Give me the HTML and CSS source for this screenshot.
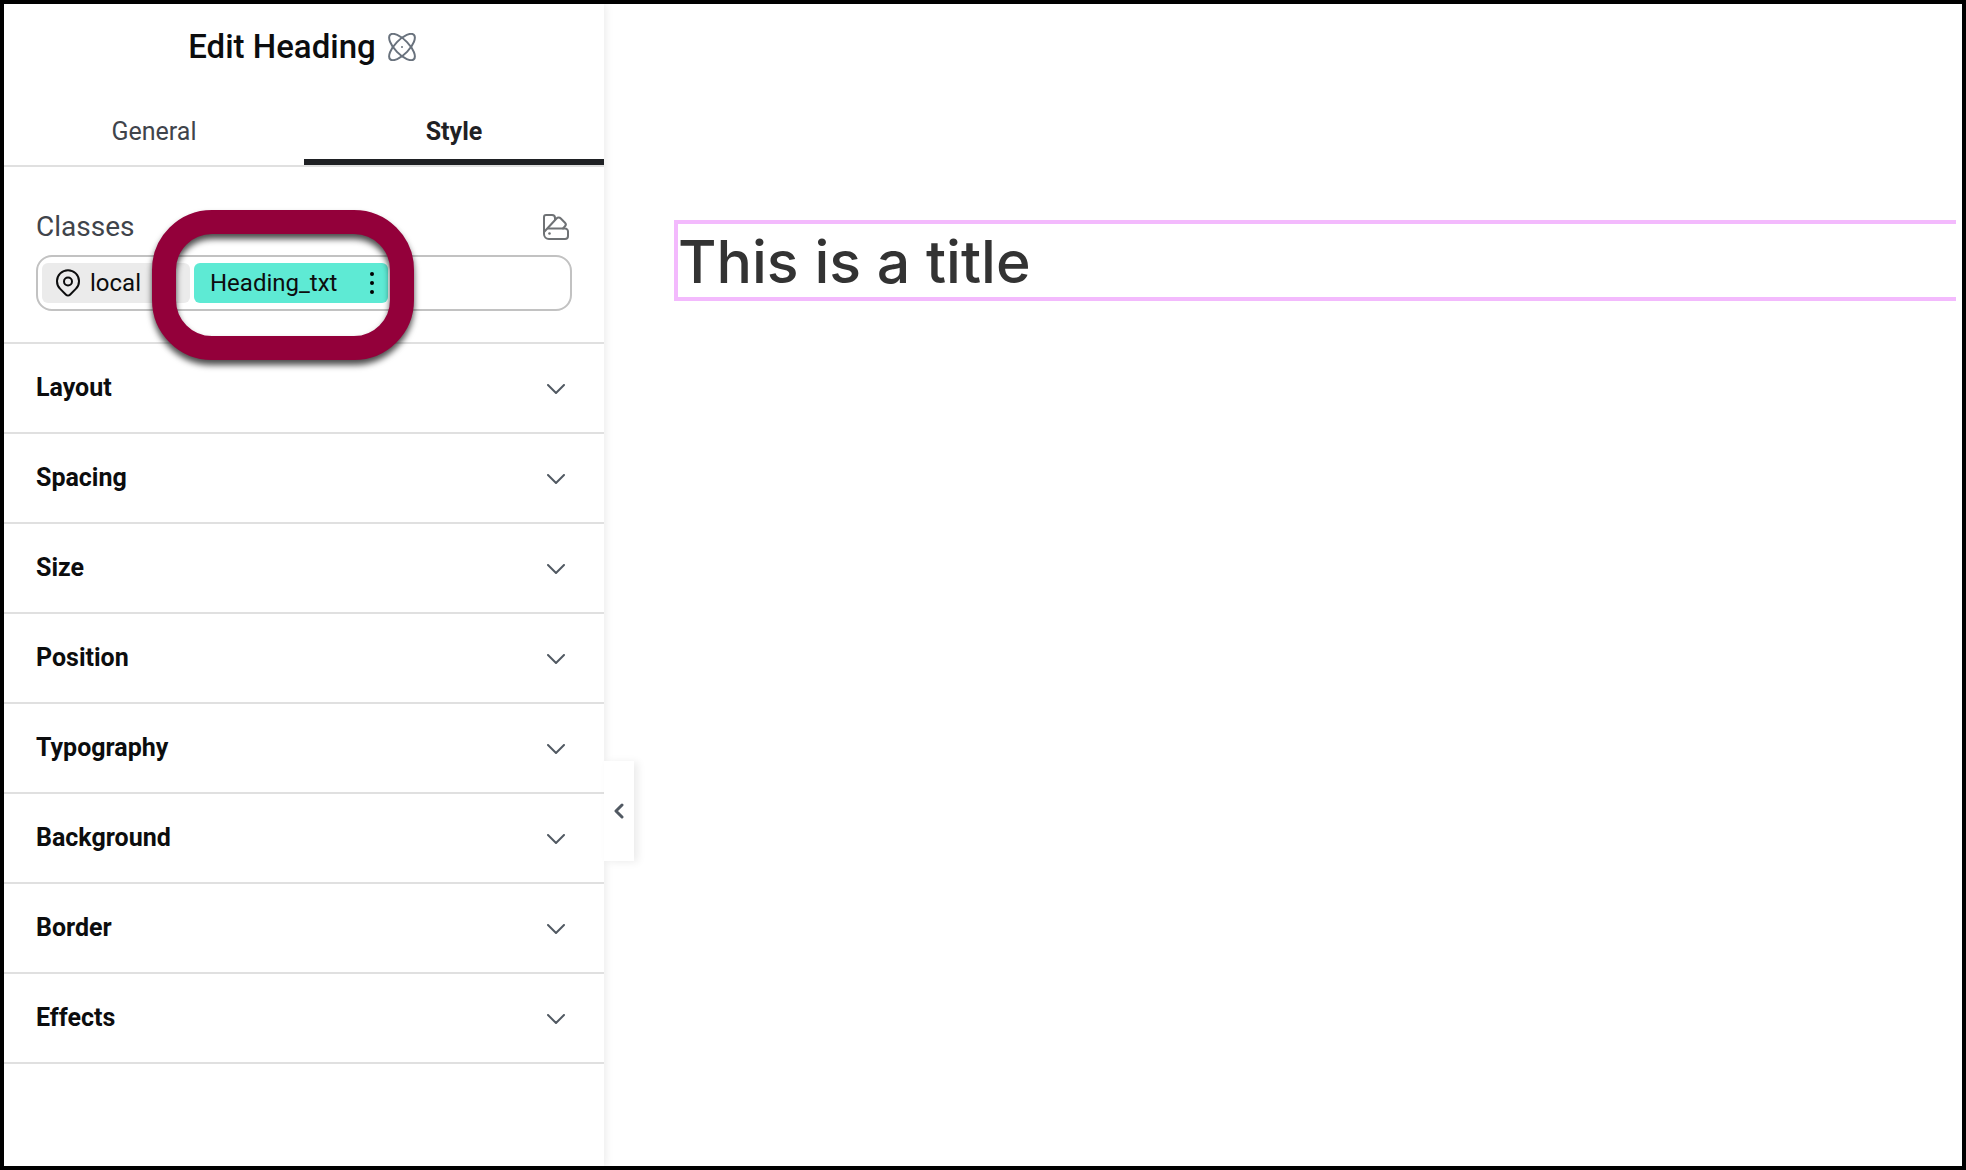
FILE: index.html
```html
<!DOCTYPE html>
<html lang="en">
<head>
  <meta charset="UTF-8">
  <title>Edit Heading</title>
  <meta name="viewport" content="width=device-width, initial-scale=1.0">
  <link rel="stylesheet" href="styles.css">
</head>
<body>

<svg class="sprite" aria-hidden="true">
  <symbol id="chevron" viewBox="0 0 18 10">
    <path d="M1 1l8 8 8-8" fill="none" stroke="currentColor" stroke-width="2" stroke-linecap="round" stroke-linejoin="round"/>
  </symbol>
</svg>

<div class="editor">
  <aside class="panel">
    <header class="panel-header">
      <h1>Edit Heading</h1>
      <svg class="atom" viewBox="0 0 28 28" aria-hidden="true">
        <g fill="none" stroke="currentColor" stroke-width="2">
          <ellipse cx="14" cy="14" rx="17" ry="7" transform="rotate(46 14 14)"/>
          <ellipse cx="14" cy="14" rx="17" ry="7" transform="rotate(-46 14 14)"/>
        </g>
        <circle cx="14" cy="14" r="1" fill="currentColor"/>
      </svg>
    </header>

    <nav class="tabs" role="tablist">
      <button class="tab" role="tab" aria-selected="false">General</button>
      <button class="tab active" role="tab" aria-selected="true">Style</button>
    </nav>

    <section class="classes">
      <div class="classes-top">
        <label for="class-input">Classes</label>
        <button class="icon-btn" aria-label="Class manager">
          <svg class="swatch" viewBox="0 0 26 26" aria-hidden="true">
            <g fill="none" stroke="currentColor" stroke-width="2" stroke-linecap="round" stroke-linejoin="round">
              <path d="M5 14.500H22a3 3 0 0 1 3 3V22a3 3 0 0 1-3 3H6a5 5 0 0 1-5-5V3a2 2 0 0 1 2-2H9a3 3 0 0 1 3 3v1.500"/>
              <path d="M1.500 17.500L13.500 4.500a3 3 0 0 1 4.300 0l4.200 4.200a2.500 2.500 0 0 1 0 3.500L20 14.500"/>
            </g>
            <circle cx="6.500" cy="19.500" r="1.300" fill="currentColor"/>
          </svg>
        </button>
      </div>
      <div class="class-field">
        <button class="chip">
          <svg class="pin" viewBox="0 0 24 28" aria-hidden="true">
            <g fill="none" stroke="currentColor" stroke-width="2">
              <path d="M12 26.500c-.8 0-1.500-.3-2-.8L4.200 19.900a11 11 0 1 1 15.600 0L14 25.700c-.5.500-1.200.8-2 .8z"/>
              <circle cx="12" cy="12.500" r="4"/>
            </g>
          </svg>
          local
        </button>
        <button class="chip selected">
          Heading_txt
          <svg class="dots" viewBox="0 0 4 24" aria-hidden="true">
            <circle cx="2" cy="3" r="2"/><circle cx="2" cy="12" r="2"/><circle cx="2" cy="21" r="2"/>
          </svg>
        </button>
        <input type="text" id="class-input">
        <div class="highlight"></div>
      </div>
    </section>

    <div class="sections">
      <button class="section">Layout <svg class="arrow"><use href="#chevron"/></svg></button>
      <button class="section">Spacing <svg class="arrow"><use href="#chevron"/></svg></button>
      <button class="section">Size <svg class="arrow"><use href="#chevron"/></svg></button>
      <button class="section">Position <svg class="arrow"><use href="#chevron"/></svg></button>
      <button class="section">Typography <svg class="arrow"><use href="#chevron"/></svg></button>
      <button class="section">Background <svg class="arrow"><use href="#chevron"/></svg></button>
      <button class="section">Border <svg class="arrow"><use href="#chevron"/></svg></button>
      <button class="section">Effects <svg class="arrow"><use href="#chevron"/></svg></button>
    </div>

    <button class="collapse" aria-label="Hide panel">
      <svg viewBox="0 0 10 16" aria-hidden="true">
        <path d="M8 2L2 8l6 6" fill="none" stroke="currentColor" stroke-width="3" stroke-linecap="round" stroke-linejoin="round"/>
      </svg>
    </button>
  </aside>

  <main class="preview">
    <h2 class="title">This is a title</h2>
  </main>
</div>

</body>
</html>
```
FILE: styles.css
```css
* {
  box-sizing: border-box;
}
body {
  margin: 0;
  font-family: Roboto, sans-serif;
  background: #fff;
  color: #0c0d0e;
}
button {
  margin: 0;
  padding: 0;
  border: none;
  background: none;
  color: inherit;
  font-family: inherit;
  cursor: pointer;
}
svg {
  display: block;
  flex: none;
}
.sprite {
  display: none;
}
.editor {
  display: flex;
  min-height: 100vh;
  border: 4px solid #000;
}

/* left panel */
.panel {
  position: relative;
  width: 600px;
  flex: none;
  background: #fff;
  box-shadow: 2px 0 8px rgba(0, 0, 0, 0.08);
}
.panel-header {
  display: flex;
  align-items: center;
  justify-content: center;
  gap: 12px;
  padding: 23px 4px 31px 0;
}
.panel-header h1 {
  margin: 0;
  font-size: 33px;
  line-height: 40px;
  font-weight: 500;
}
.atom {
  width: 28px;
  height: 28px;
  color: #69727d;
}
.tabs {
  display: flex;
  border-bottom: 2px solid #e0e0e0;
}
.tab {
  flex: 1;
  height: 67px;
  padding-top: 6px;
  border-bottom: 6px solid transparent;
  font-size: 25px;
  color: #3f444b;
}
.tab.active {
  border-bottom-color: #1f2124;
  font-weight: 700;
  color: #1f2124;
}

/* classes */
.classes {
  padding: 44px 32px 31px;
  border-bottom: 2px solid #e0e0e0;
}
.classes-top {
  display: flex;
  align-items: center;
  justify-content: space-between;
  margin-bottom: 12px;
  padding-right: 3px;
  font-size: 28px;
  line-height: 32px;
  color: #3f444b;
}
.swatch {
  width: 26px;
  height: 26px;
  color: #6f7275;
}
.class-field {
  position: relative;
  display: flex;
  align-items: center;
  gap: 4px;
  height: 56px;
  padding: 0 4px;
  border: 2px solid #c2c2c2;
  border-radius: 16px;
}
.class-field input {
  flex: 1;
  min-width: 0;
  border: none;
  outline: none;
  background: none;
  font-family: inherit;
  font-size: 24px;
}
.chip {
  display: flex;
  align-items: center;
  gap: 10px;
  width: 148px;
  height: 40px;
  padding: 0 14px;
  border-radius: 6px;
  background: #ebebeb;
  font-size: 24px;
}
.chip.selected {
  justify-content: space-between;
  width: 194px;
  padding: 0 14px 0 16px;
  background: #5eead4;
}
.pin {
  width: 24px;
  height: 28px;
}
.dots {
  width: 4px;
  height: 24px;
}
.highlight {
  position: absolute;
  top: -47px;
  left: 114px;
  width: 262px;
  height: 150px;
  border: 24px solid #93003a;
  border-radius: 60px;
  filter: drop-shadow(0 5px 3px rgba(0, 0, 0, 0.7));
  pointer-events: none;
}

/* style sections */
.section {
  display: flex;
  align-items: center;
  justify-content: space-between;
  width: 100%;
  height: 90px;
  padding: 0 39px 2px 32px;
  border-bottom: 2px solid #e0e0e0;
  font-size: 25px;
  font-weight: 700;
}
.arrow {
  width: 18px;
  height: 10px;
  margin-top: 4px;
  color: #515962;
}
.collapse {
  position: absolute;
  top: 757px;
  left: 100%;
  display: flex;
  align-items: center;
  justify-content: center;
  width: 30px;
  height: 100px;
  background: #fff;
  box-shadow: 4px 1px 8px rgba(0, 0, 0, 0.08);
  color: #515962;
}
.collapse svg {
  width: 10px;
  height: 16px;
}

/* canvas */
.preview {
  flex: 1;
  padding: 216px 6px 0 70px;
}
.title {
  margin: 0;
  padding-top: 3px;
  border: 4px solid #f3bafd;
  border-right: none;
  font-family: Inter, sans-serif;
  font-size: 59px;
  line-height: 70px;
  font-weight: 500;
  color: #333;
}
```
